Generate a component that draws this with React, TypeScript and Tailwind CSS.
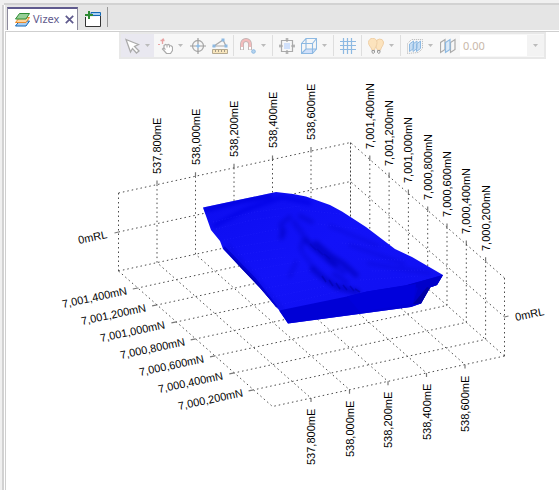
import React from 'react';
import { clsx } from 'clsx';

const eastings = ['537,800mE', '538,000mE', '538,200mE', '538,400mE', '538,600mE'];
const northings = [
  '7,001,400mN',
  '7,001,200mN',
  '7,001,000mN',
  '7,000,800mN',
  '7,000,600mN',
  '7,000,400mN',
  '7,000,200mN',
];

// Screen vectors of the projected bounding box
const ORIGIN = { x: 118.5, y: 193 };
const EAST = { x: 232, y: -50.5 };
const SOUTH = { x: 154, y: 135.5 };
const DEPTH = 78;

const project = (e: number, s: number, d = 0) => ({
  x: ORIGIN.x + EAST.x * e + SOUTH.x * s,
  y: ORIGIN.y + EAST.y * e + SOUTH.y * s + DEPTH * d,
});

type Point = { x: number; y: number };

const GridLine = ({ points, strong }: { points: Point[]; strong?: boolean }) => (
  <polyline
    points={points.map((p) => `${p.x},${p.y}`).join(' ')}
    fill="none"
    stroke={strong ? '#444' : '#4a4a4a'}
    strokeWidth="1"
    strokeDasharray={strong ? '2 2' : '1.5 3'}
  />
);

const Tick = ({ from, dx, dy }: { from: Point; dx: number; dy: number }) => (
  <line x1={from.x} y1={from.y} x2={from.x + dx} y2={from.y + dy} stroke="#777" strokeWidth="1.2" />
);

const Label = ({ x, y, angle, children }: { x: number; y: number; angle: number; children: string }) => (
  <text transform={`translate(${x} ${y}) rotate(${angle})`} className="text-[11px]" fill="#000">
    {children}
  </text>
);

const BoundingGrid = () => (
  <g>
    {eastings.map((name, i) => {
      const e = (38.5 * (i + 1)) / EAST.x;
      const top = project(e, 0);
      const front = project(e, 1, 1);
      return (
        <g key={name}>
          <GridLine points={[top, project(e, 0, 1), front]} />
          <Tick from={top} dx={0} dy={-4} />
          <Tick from={front} dx={0} dy={4} />
          <Label x={Math.round(top.x + 4)} y={Math.round(top.y - 11)} angle={-90}>{name}</Label>
          <Label x={Math.round(front.x + 4)} y={Math.round(front.y + 67)} angle={-90}>{name}</Label>
        </g>
      );
    })}
    {northings.map((name, i) => {
      const s = (19.3 * (i + 1)) / SOUTH.x;
      const top = project(1, s);
      const left = project(0, s, 1);
      return (
        <g key={name}>
          <GridLine points={[top, project(1, s, 1), left]} />
          <Tick from={top} dx={0} dy={-4} />
          <Tick from={left} dx={-5} dy={1} />
          <Label x={Math.round(top.x + 4)} y={Math.round(top.y - 10)} angle={-90}>{name}</Label>
          <Label x={Math.round(left.x - 75)} y={Math.round(left.y + 20)} angle={-12}>{name}</Label>
        </g>
      );
    })}
    <GridLine points={[project(0, 0), project(1, 0), project(1, 1)]} />
    <GridLine points={[project(0, 0, 0.5), project(1, 0, 0.5), project(1, 1, 0.5)]} />
    <GridLine points={[project(0, 0, 1), project(1, 0, 1), project(1, 1, 1)]} />
    <GridLine points={[project(0, 0, 1), project(0, 1, 1), project(1, 1, 1)]} />
    <GridLine points={[project(0, 0), project(0, 0, 1)]} />
    <GridLine points={[project(1, 1), project(1, 1, 1)]} />
    <GridLine points={[project(1, 0), project(1, 0, 1)]} strong />
    <Tick from={project(0, 0, 0.5)} dx={-4} dy={1} />
    <Tick from={project(1, 1, 0.5)} dx={4} dy={-1} />
    <Label x={79} y={244} angle={-12}>0mRL</Label>
    <Label x={516} y={321} angle={-12}>0mRL</Label>
  </g>
);

const outline =
  '203,207.5 276,192 293,194 306,196.5 330,205 342,211.5 366,227 395,249 412,257 443,275 437,285 430,287.5 421,303.5 411,307 288,323.5 279,310 260,288 223,249 220,241 211,230';

const Solid = () => (
  <g>
    <defs>
      <linearGradient id="surface" x1="0" y1="0" x2="1" y2="1">
        <stop offset="0" stopColor="#0c0cf0" />
        <stop offset="0.45" stopColor="#1212f8" />
        <stop offset="1" stopColor="#1010f0" />
      </linearGradient>
      <filter id="soft" x="-20%" y="-20%" width="140%" height="140%">
        <feGaussianBlur stdDeviation="2" />
      </filter>
      <clipPath id="solid-clip">
        <polygon points={outline} />
      </clipPath>
    </defs>
    <polygon points={outline} fill="url(#surface)" />
    <g clipPath="url(#solid-clip)">
      <g filter="url(#soft)" fill="none" stroke="#0202bc" strokeLinecap="round">
        <path d="M204 210 L240 201 L270 196" stroke="#0606de" strokeWidth="4" />
        <path d="M214 226 L245 210 L282 197 L310 203" stroke="#0909e4" strokeWidth="3" />
        <path d="M290 217 l-9 7 l2 12 M300 216 l12 6" strokeWidth="4" opacity="0.45" />
        <path d="M284 230 l-3 8 M294 222 l10 14 l-3 12" strokeWidth="5" opacity="0.35" />
        <path d="M306 240 l8 8 l11 9 l10 8 M316 243 l14 12 l14 9 l12 11" strokeWidth="5" opacity="0.7" />
        <path d="M296 262 l-6 14 M302 252 l12 16" strokeWidth="4" opacity="0.3" />
        <path d="M313 269 l12 10 l12 8 l20 5" strokeWidth="6" opacity="0.65" />
        <path d="M328 260 l16 12 M334 274 l12 8" strokeWidth="5" opacity="0.4" />
        <path d="M330 226 l22 9 l26 11 M350 245 l26 9 l28 10 M368 263 l28 5 l34 5" strokeWidth="3" opacity="0.3" />
        <path d="M228 246 L282 309" strokeWidth="3" opacity="0.3" />
      </g>
      <g fill="none" stroke="#0000a4" strokeWidth="1.5" opacity="0.5">
        <path d="M322 276 l4 6 M329 280 l4 6 M336 283 l4 6 M343 285 l4 5 M350 286 l4 5 M355 289 l5 3" />
        <path d="M310 244 l6 6 M317 249 l6 6 M324 254 l6 5" opacity="0.5" />
      </g>
      <g fill="none" stroke="#2a2aff" strokeWidth="0.7" strokeDasharray="1 2" opacity="0.6">
        <path d="M213 222 L255 212 L300 206 M216 229 L252 220 L280 216 M224 240 L278 229 M230 248 L280 240 M238 255 L286 248 M245 262 L286 257 M252 270 L302 261 M259 279 L312 270 M266 288 L318 279 M273 297 L326 286 M279 305 L340 291" />
        <path d="M300 210 L340 214 M318 224 L360 229 M342 243 L386 247 M358 259 L404 260 M372 271 L425 270 M360 280 L420 276" />
      </g>
    </g>
    <polygon points="223,248 228,250 257,281 270,298 279,310 260,288 240,267" fill="#0000b4" />
    <path d="M224 247 L255 279 L277 307" fill="none" stroke="#0303d2" strokeWidth="2" />
    <polygon
      points="279,310.5 347,296.5 367,291.5 407,285 443,275 437,285 430,287.5 421,303.5 411,307 288,323.5"
      fill="#0000d6"
    />
    <polygon points="407,285 443,275 437,285 430,287.5 421,303.5 413,303 418,288" fill="#0000ca" />
    <polygon points="427,287 430,288 421,303.5 413,304" fill="#0000a6" />
    <polygon points="347,296.5 367,291.5 416,284 413,303 360,312" fill="#0000dc" />
  </g>
);

const Glyph = ({ children }: { children: React.ReactNode }) => (
  <svg width="16" height="16" viewBox="0 0 16 16" fill="none" aria-hidden="true" className="shrink-0">
    {children}
  </svg>
);

const Caret = () => (
  <svg width="5" height="3" viewBox="0 0 5 3" aria-hidden="true" className="shrink-0">
    <path d="M0 0h5L2.5 3z" fill="#bbb" />
  </svg>
);

const Tool = ({
  label,
  menu,
  active,
  children,
}: {
  label: string;
  menu?: boolean;
  active?: boolean;
  children: React.ReactNode;
}) => (
  <button
    type="button"
    aria-label={label}
    className={clsx(
      'flex h-[23px] shrink-0 items-center pl-[3px]',
      menu ? 'gap-[5px] pr-1' : 'pr-[3px]',
      active && 'bg-[#e9e8f0]'
    )}
  >
    <Glyph>{children}</Glyph>
    {menu && <Caret />}
  </button>
);

const Divider = () => <div className="mr-[3px] ml-0.5 h-[21px] w-px shrink-0 bg-[#dedede]" />;

const Toolbar = () => (
  <div
    role="toolbar"
    aria-label="View tools"
    className="flex h-[27px] items-center border-2 border-[#e8e8e8] bg-[#f7f7f7]"
  >
    <Tool label="Select" menu active>
      <path d="M2 1.5L14.5 6.5L10.5 8.5L15 13L12.5 15L8.500 10.5L6.5 14z" fill="#fff" stroke="#aaa" strokeWidth="1.3" />
    </Tool>
    <Tool label="Pan" menu>
      <path d="M5.5 6V1.5L7 .8M3.500 2.500h4" stroke="#e8a4a4" strokeWidth="1.3" />
      <path d="M1 6.500h2" stroke="#e8a4a4" />
      <path d="M7 10V7.500l1.500-1l1.500.5l1.500-.5L13 7.500l1.500.5l1 1v3.500l-2 3H9.500L5.500 11l1-1l2 1.500" fill="#fff" stroke="#aaa" strokeWidth="1.200" />
      <path d="M10 7.500v2M12.500 7.500v2" stroke="#aaa" />
    </Tool>
    <Tool label="Centre">
      <circle cx="8" cy="8" r="5.5" stroke="#aaa" strokeWidth="1.3" />
      <path d="M8 0v6M8 10v6M0 8h6M10 8h6" stroke="#a0a0a0" strokeWidth="1.2" />
      <path d="M6 8h4M8 6v4" stroke="#8db9e2" strokeWidth="1.5" />
    </Tool>
    <Tool label="Measure">
      <path d="M2 8L11 2L14 8z" stroke="#aaa" strokeWidth="1.2" />
      <path d="M0.5 6.5h3v3h-3zM9.5 0.5h3v3h-3zM12.5 6.5h3v3h-3z" fill="#8db9e2" />
      <path d="M0.5 11.5h15v4h-15z" fill="#f8e6bd" stroke="#b5a98f" />
      <path d="M3.5 12v2M6.5 12v2M9.5 12v2M12.5 12v2" stroke="#a39a88" />
    </Tool>
    <Divider />
    <Tool label="Snap" menu>
      <path d="M2 12V6a4 4 0 0 1 8 0v6" stroke="#bcb0b0" strokeWidth="3.8" />
      <path d="M2 9V6a4 4 0 0 1 8 0v3" stroke="#f3bcbc" strokeWidth="2.4" />
      <path d="M1 10.3h2M9 10.3h2" stroke="#fff" strokeWidth="2.4" />
      <circle cx="13.5" cy="13.5" r="1.8" fill="#b5d4f0" stroke="#8db9e2" />
    </Tool>
    <Divider />
    <Tool label="Zoom to extents">
      <path d="M2.5 2.5h11v11h-11z" stroke="#aaa" strokeWidth="1.2" />
      <path d="M5 5h6v6H5z" fill="#d0e0fa" />
      <path d="M8 0v4M8 12v4M0 8h4M12 8h4M6.5 1h3M6.5 15h3M1 6.5v3M15 6.5v3" stroke="#a5a5a5" strokeWidth="1.2" />
    </Tool>
    <Tool label="View direction" menu>
      <path d="M0.5 15.5L5 11h10.5l-4 4.5z" fill="#d0e0fa" />
      <path d="M0.5 5.5h11v10h-11zM5 0.5h10.5V11H5zM0.5 5.5L5 .5M11.5 5.5l4-5M0.5 15.5L5 11M11.5 15.5l4-4.5" stroke="#8db9e2" strokeWidth="1.1" />
    </Tool>
    <Divider />
    <Tool label="Grid">
      <path d="M3.5 0v16M7.5 0v16M11.5 0v16M0 3.5h16M0 7.5h16M0 11.5h16" stroke="#8db9e2" strokeWidth="1.2" />
    </Tool>
    <Divider />
    <Tool label="Lighting" menu>
      <path d="M8 5a3.800 3.800 0 0 1 7.500-1c.3 3.500-2.500 5-3 8H9.500L8 9z" fill="#fce3bd" stroke="#efcfa6" />
      <path d="M0.5 4.500a4 4 0 0 1 8.500 0c0 3.500-2 4.500-2.500 7.500H4C3.500 9 .5 8 .5 4.500z" fill="#fce3bd" stroke="#efcfa6" />
      <path d="M4 12.500h2.500v2L5.200 15.500L4 14.500zM9.500 12.500H12v2l-1.200 1l-1.300-1z" fill="#eee" stroke="#999" />
    </Tool>
    <Divider />
    <Tool label="Sections" menu>
      <path d="M0.5 15.5v-10l4-4h11v9l-4 4z" stroke="#b5b5b5" strokeDasharray="1 1" />
      <path d="M2.500 13.500v-7.500l4-3v7.500zM6 13.500v-7.500l4-3v7.500zM9.500 13.500v-7.500l4-3v7.500z" fill="#c6ddf3" stroke="#8db9e2" />
    </Tool>
    <Tool label="Clip section">
      <path d="M0.5 14.5v-10l4.5-3v10z" stroke="#aaa" strokeWidth="1.2" />
      <path d="M10.5 14.5v-10l4.5-3v10z" stroke="#aaa" strokeWidth="1.2" />
      <path d="M5.5 14.5v-10l4.5-3v10z" fill="#dceaf8" stroke="#8db9e2" strokeWidth="1.2" />
    </Tool>
    <div className="ml-px flex h-[21px] items-center">
      <input
        aria-label="Section width"
        defaultValue="0.00"
        className="h-full w-[67px] bg-white px-[3px] font-['Noto_Sans',sans-serif] text-[11px] text-[#c9b8aa] outline-none"
      />
      <button type="button" aria-label="Section width options" className="flex h-full w-[17px] items-center justify-center bg-[#f3f3f3]">
        <Caret />
      </button>
    </div>
  </div>
);

const TabStrip = () => (
  <div className="flex h-[25px] items-start bg-[#e5e5e5] pt-0.5 pl-0.5">
    <div className="flex h-[23px] items-center border-x border-t-2 border-x-[#8c8a9c] border-t-[#5f5a8d] bg-white pr-[3px] pl-[7px]">
      <svg width="15" height="14" viewBox="0 0 15 14" aria-hidden="true">
        <path d="M4.5 8h10l-3.5 5H.5z" fill="#a6cdf2" stroke="#1267b4" />
        <path d="M4.5 4.5h10L11 9.5H.5z" fill="#fbd49c" stroke="#e98b2c" />
        <path d="M4.5.5h10L11 6H.5z" fill="#96cf96" stroke="#2e8b34" />
      </svg>
      <span className="ml-[3px] font-['Noto_Sans',sans-serif] text-[11px] text-[#5f5a8d]">Vizex</span>
      <button type="button" aria-label="Close Vizex" className="ml-1.5">
        <svg width="9" height="9" viewBox="0 0 9 9" aria-hidden="true">
          <path d="M.8.8l7.4 7.4M8.2.8L.8 8.2" stroke="#5f5a8d" strokeWidth="1.7" />
        </svg>
      </button>
    </div>
    <button type="button" aria-label="New view" className="mt-1 ml-[7px]">
      <svg width="16" height="16" viewBox="0 0 16 16" aria-hidden="true">
        <path d="M.5 6v9.5h15V5" fill="#fff" stroke="#333" />
        <path d="M6 1.5h9.5v3H6z" fill="#a6cdf2" stroke="#1267b4" />
        <path d="M4 0v8M0 4h8" stroke="#2e8b34" strokeWidth="2" />
      </svg>
    </button>
    <div className="ml-1.5 h-5 w-px bg-[#999]" />
  </div>
);

const Viewport = () => (
  <main className="flex-1 border-t border-l border-[#cfcfcf] bg-white">
    <div className="flex justify-end pr-[13px]">
      <Toolbar />
    </div>
    <svg
      viewBox="6 59 553 430"
      role="img"
      aria-label="Solid model in bounding grid"
      className="block w-full font-['Liberation_Sans',sans-serif]"
    >
      <BoundingGrid />
      <Solid />
    </svg>
  </main>
);

export default function App() {
  return (
    <div className="flex min-h-screen bg-[#f0f0f0] pt-[3px] pl-0.5">
      <div className="mt-0.5 w-0.5 bg-[#d2d2d2]" />
      <div className="flex min-w-0 flex-1 flex-col border-t-2 border-[#d2d2d2] bg-white pl-px">
        <TabStrip />
        <div className="h-px bg-white" />
        <Viewport />
      </div>
    </div>
  );
}
